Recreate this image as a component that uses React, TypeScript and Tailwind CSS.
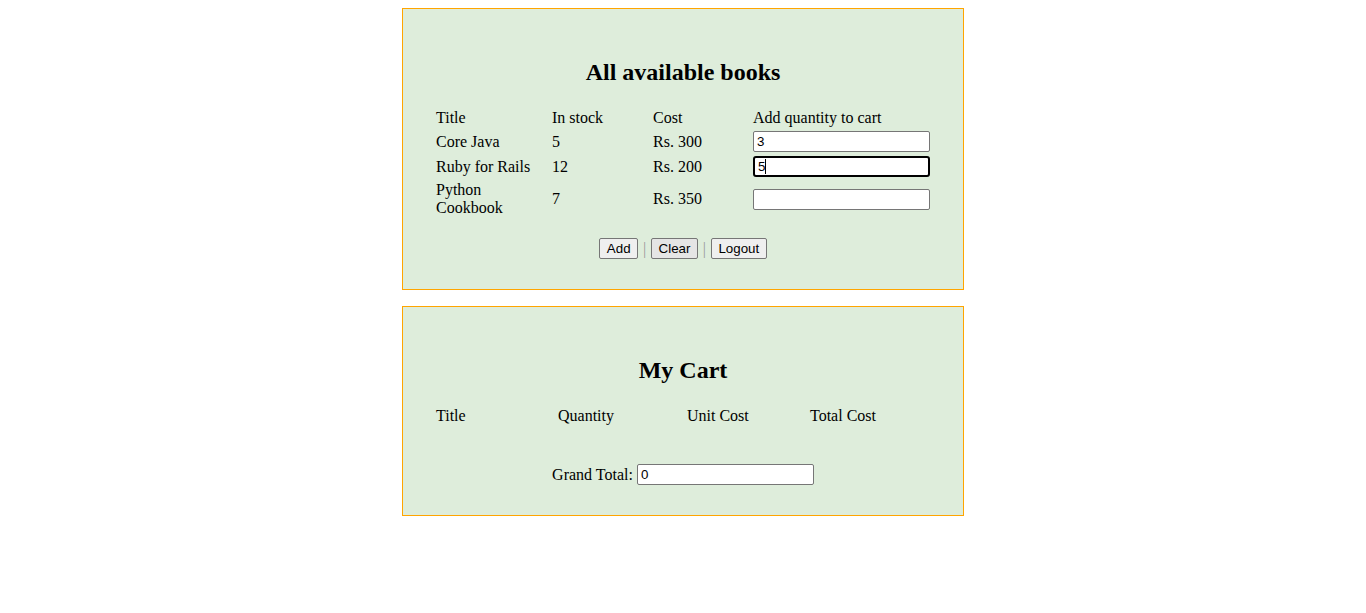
import React from "react";

const serif = { fontFamily: '"Liberation Serif", "Times New Roman", serif' };

function Btn({ children, active }: { children: React.ReactNode; active?: boolean }) {
  return (
    <button
      className={
        "h-[21px] px-[6.5px] py-px border border-[#767676] rounded-[2px] text-[13.33px] leading-[15px] text-black font-['Liberation_Sans',Arial,sans-serif] " +
        (active ? "bg-[#e5e5e5] border-[#4f4f4f]" : "bg-[#efefef]")
      }
    >
      {children}
    </button>
  );
}

function Input({ value, focused }: { value?: string; focused?: boolean }) {
  return (
    <div
      className={
        "w-[177px] h-[21px] bg-white rounded-[2px] px-[3px] text-[13.33px] leading-[17px] text-black font-['Liberation_Sans',Arial,sans-serif] flex items-center " +
        (focused ? "border-2 border-black rounded-[3px] px-[2px]" : "border border-[#767676]")
      }
    >
      {value}
      {focused && <span className="inline-block w-px h-[15px] bg-black" />}
    </div>
  );
}

export default function App() {
  const books = [
    { t: "Core Java", s: "5", c: "Rs. 300", v: "3" },
    { t: "Ruby for Rails", s: "12", c: "Rs. 200", v: "5", f: true },
    { t: "Python\nCookbook", s: "7", c: "Rs. 350", v: "" },
  ];
  return (
    <div className="bg-white min-h-[613px] pt-[8px] text-[16px] text-black" style={serif}>
      <div className="mx-auto w-[562px] border border-[#ffa500] bg-[#deeddb] p-[30px]">
        <h2 className="text-[24px] font-bold text-center my-[20px] leading-[27px]">All available books</h2>
        <table className="w-[500px] table-fixed border-separate border-spacing-[2px] text-left">
          <colgroup>
            <col className="w-[114px]" />
            <col className="w-[99px]" />
            <col className="w-[98px]" />
            <col />
          </colgroup>
          <tbody>
            <tr>
              <td className="p-px leading-[18px]">Title</td>
              <td className="p-px leading-[18px]">In stock</td>
              <td className="p-px leading-[18px]">Cost</td>
              <td className="p-px leading-[18px]">Add quantity to cart</td>
            </tr>
            {books.map((b) => (
              <tr key={b.t}>
                <td className="p-px leading-[18px] align-middle whitespace-pre-line">{b.t}</td>
                <td className="p-px leading-[18px] align-middle">{b.s}</td>
                <td className="p-px leading-[18px] align-middle">{b.c}</td>
                <td className="p-px align-middle">
                  <Input value={b.v} focused={b.f} />
                </td>
              </tr>
            ))}
          </tbody>
        </table>
        <div className="mt-[18px] flex justify-center items-center">
          <Btn>Add</Btn>
          <span className="w-[13px] text-center text-[#999] leading-[18px]">|</span>
          <Btn active>Clear</Btn>
          <span className="w-[13px] text-center text-[#999] leading-[18px]">|</span>
          <Btn>Logout</Btn>
        </div>
      </div>

      <div className="mx-auto mt-[16px] w-[562px] border border-[#ffa500] bg-[#deeddb] p-[30px]">
        <h2 className="text-[24px] font-bold text-center my-[20px] leading-[27px]">My Cart</h2>
        <table className="mt-[1px] w-[500px] table-fixed border-separate border-spacing-[2px] text-left">
          <colgroup>
            <col className="w-[120px]" />
            <col className="w-[127px]" />
            <col className="w-[121px]" />
            <col />
          </colgroup>
          <tbody>
            <tr>
              <td className="p-px leading-[18px]">Title</td>
              <td className="p-px leading-[18px]">Quantity</td>
              <td className="p-px leading-[18px]">Unit Cost</td>
              <td className="p-px leading-[18px]">Total Cost</td>
            </tr>
          </tbody>
        </table>
        <div className="mt-[36px] flex justify-center items-center">
          <span className="leading-[18px] mr-[4px]">Grand Total:</span>
          <Input value="0" />
        </div>
      </div>
    </div>
  );
}
